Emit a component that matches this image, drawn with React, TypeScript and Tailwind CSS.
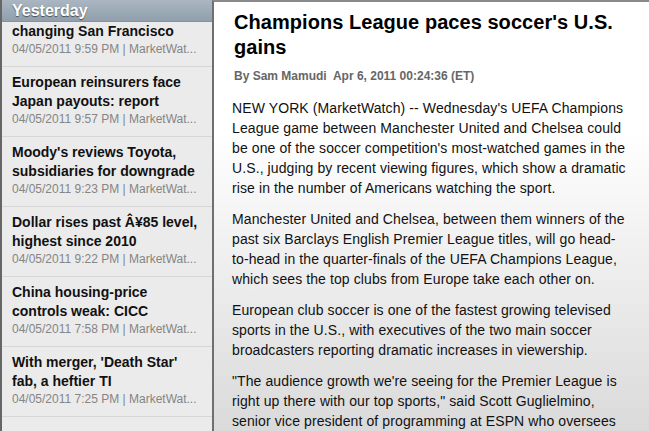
const stories = [
  {
    title: "European reinsurers face Japan payouts: report",
    date: "04/05/2011 9:57 PM | MarketWat...",
  },
  {
    title: "Moody's reviews Toyota, subsidiaries for downgrade",
    date: "04/05/2011 9:23 PM | MarketWat...",
  },
  {
    title: "Dollar rises past Â¥85 level, highest since 2010",
    date: "04/05/2011 9:22 PM | MarketWat...",
  },
  {
    title: "China housing-price controls weak: CICC",
    date: "04/05/2011 7:58 PM | MarketWat...",
  },
  {
    title: "With merger, 'Death Star' fab, a heftier TI",
    date: "04/05/2011 7:25 PM | MarketWat...",
  },
];

const paragraphs = [
  "NEW YORK (MarketWatch) -- Wednesday's UEFA Champions League game between Manchester United and Chelsea could be one of the soccer competition's most-watched games in the U.S., judging by recent viewing figures, which show a dramatic rise in the number of Americans watching the sport.",
  "Manchester United and Chelsea, between them winners of the past six Barclays English Premier League titles, will go head-to-head in the quarter-finals of the UEFA Champions League, which sees the top clubs from Europe take each other on.",
  "European club soccer is one of the fastest growing televised sports in the U.S., with executives of the two main soccer broadcasters reporting dramatic increases in viewership.",
  "\"The audience growth we're seeing for the Premier League is right up there with our top sports,\" said Scott Guglielmino, senior vice president of programming at ESPN who oversees the network's soccer coverage.",
];

export default function App() {
  return (
    <div className="flex w-[649px] h-[431px] overflow-hidden font-['Liberation_Sans',Arial,sans-serif]">
      {/* story list */}
      <div className="flex flex-col w-[212px] shrink-0 h-full bg-[#ebebeb] border-l-2 border-[#666]">
        <div className="h-[22px] shrink-0 pl-[10px] bg-gradient-to-b from-[#aab6c2] to-[#919fad] border-b border-[#8592a0] text-white font-bold text-[16px] leading-[21px] [text-shadow:0_1px_1px_rgba(0,0,0,0.55)]">
          Yesterday
        </div>

        <div className="pl-[10px] pr-[12px] pb-[9px] border-b border-[#d6d6d6]">
          <div className="text-[14px] leading-[19px] font-bold text-[#111]">
            changing San Francisco
          </div>
          <div className="text-[12px] leading-[16px] text-[#858585] whitespace-nowrap">
            04/05/2011 9:59 PM | MarketWat...
          </div>
        </div>

        {stories.map((s) => (
          <div
            key={s.date}
            className="pl-[10px] pr-[12px] pt-[6px] pb-[9px] border-b border-[#d6d6d6]"
          >
            <div className="text-[14px] leading-[19px] font-bold text-[#111]">
              {s.title}
            </div>
            <div className="text-[12px] leading-[16px] text-[#858585] whitespace-nowrap">
              {s.date}
            </div>
          </div>
        ))}
      </div>

      {/* article */}
      <div className="flex-1 h-full border-l-2 border-[#6f6f6f] border-t-2 border-t-[#8a8a8a] bg-[linear-gradient(to_bottom,#ffffff_30%,#dadada_100%)] pl-[18px] pr-[21px] pt-[8px]">
        <h1 className="pl-[2px] text-[20px] leading-[25px] font-bold text-black tracking-[0.05px]">
          Champions League paces soccer's U.S. gains
        </h1>
        <div className="pl-[2px] mt-[8px] text-[12px] leading-[16px] font-bold text-[#666] whitespace-pre">
          By Sam Mamudi  Apr 6, 2011 00:24:36 (ET)
        </div>
        <div className="mt-[14px] flex flex-col gap-[11px] text-[14px] leading-[20px] text-[#111] tracking-[0.1px]">
          {paragraphs.map((p) => (
            <p key={p.slice(0, 20)}>{p}</p>
          ))}
        </div>
      </div>
    </div>
  );
}
